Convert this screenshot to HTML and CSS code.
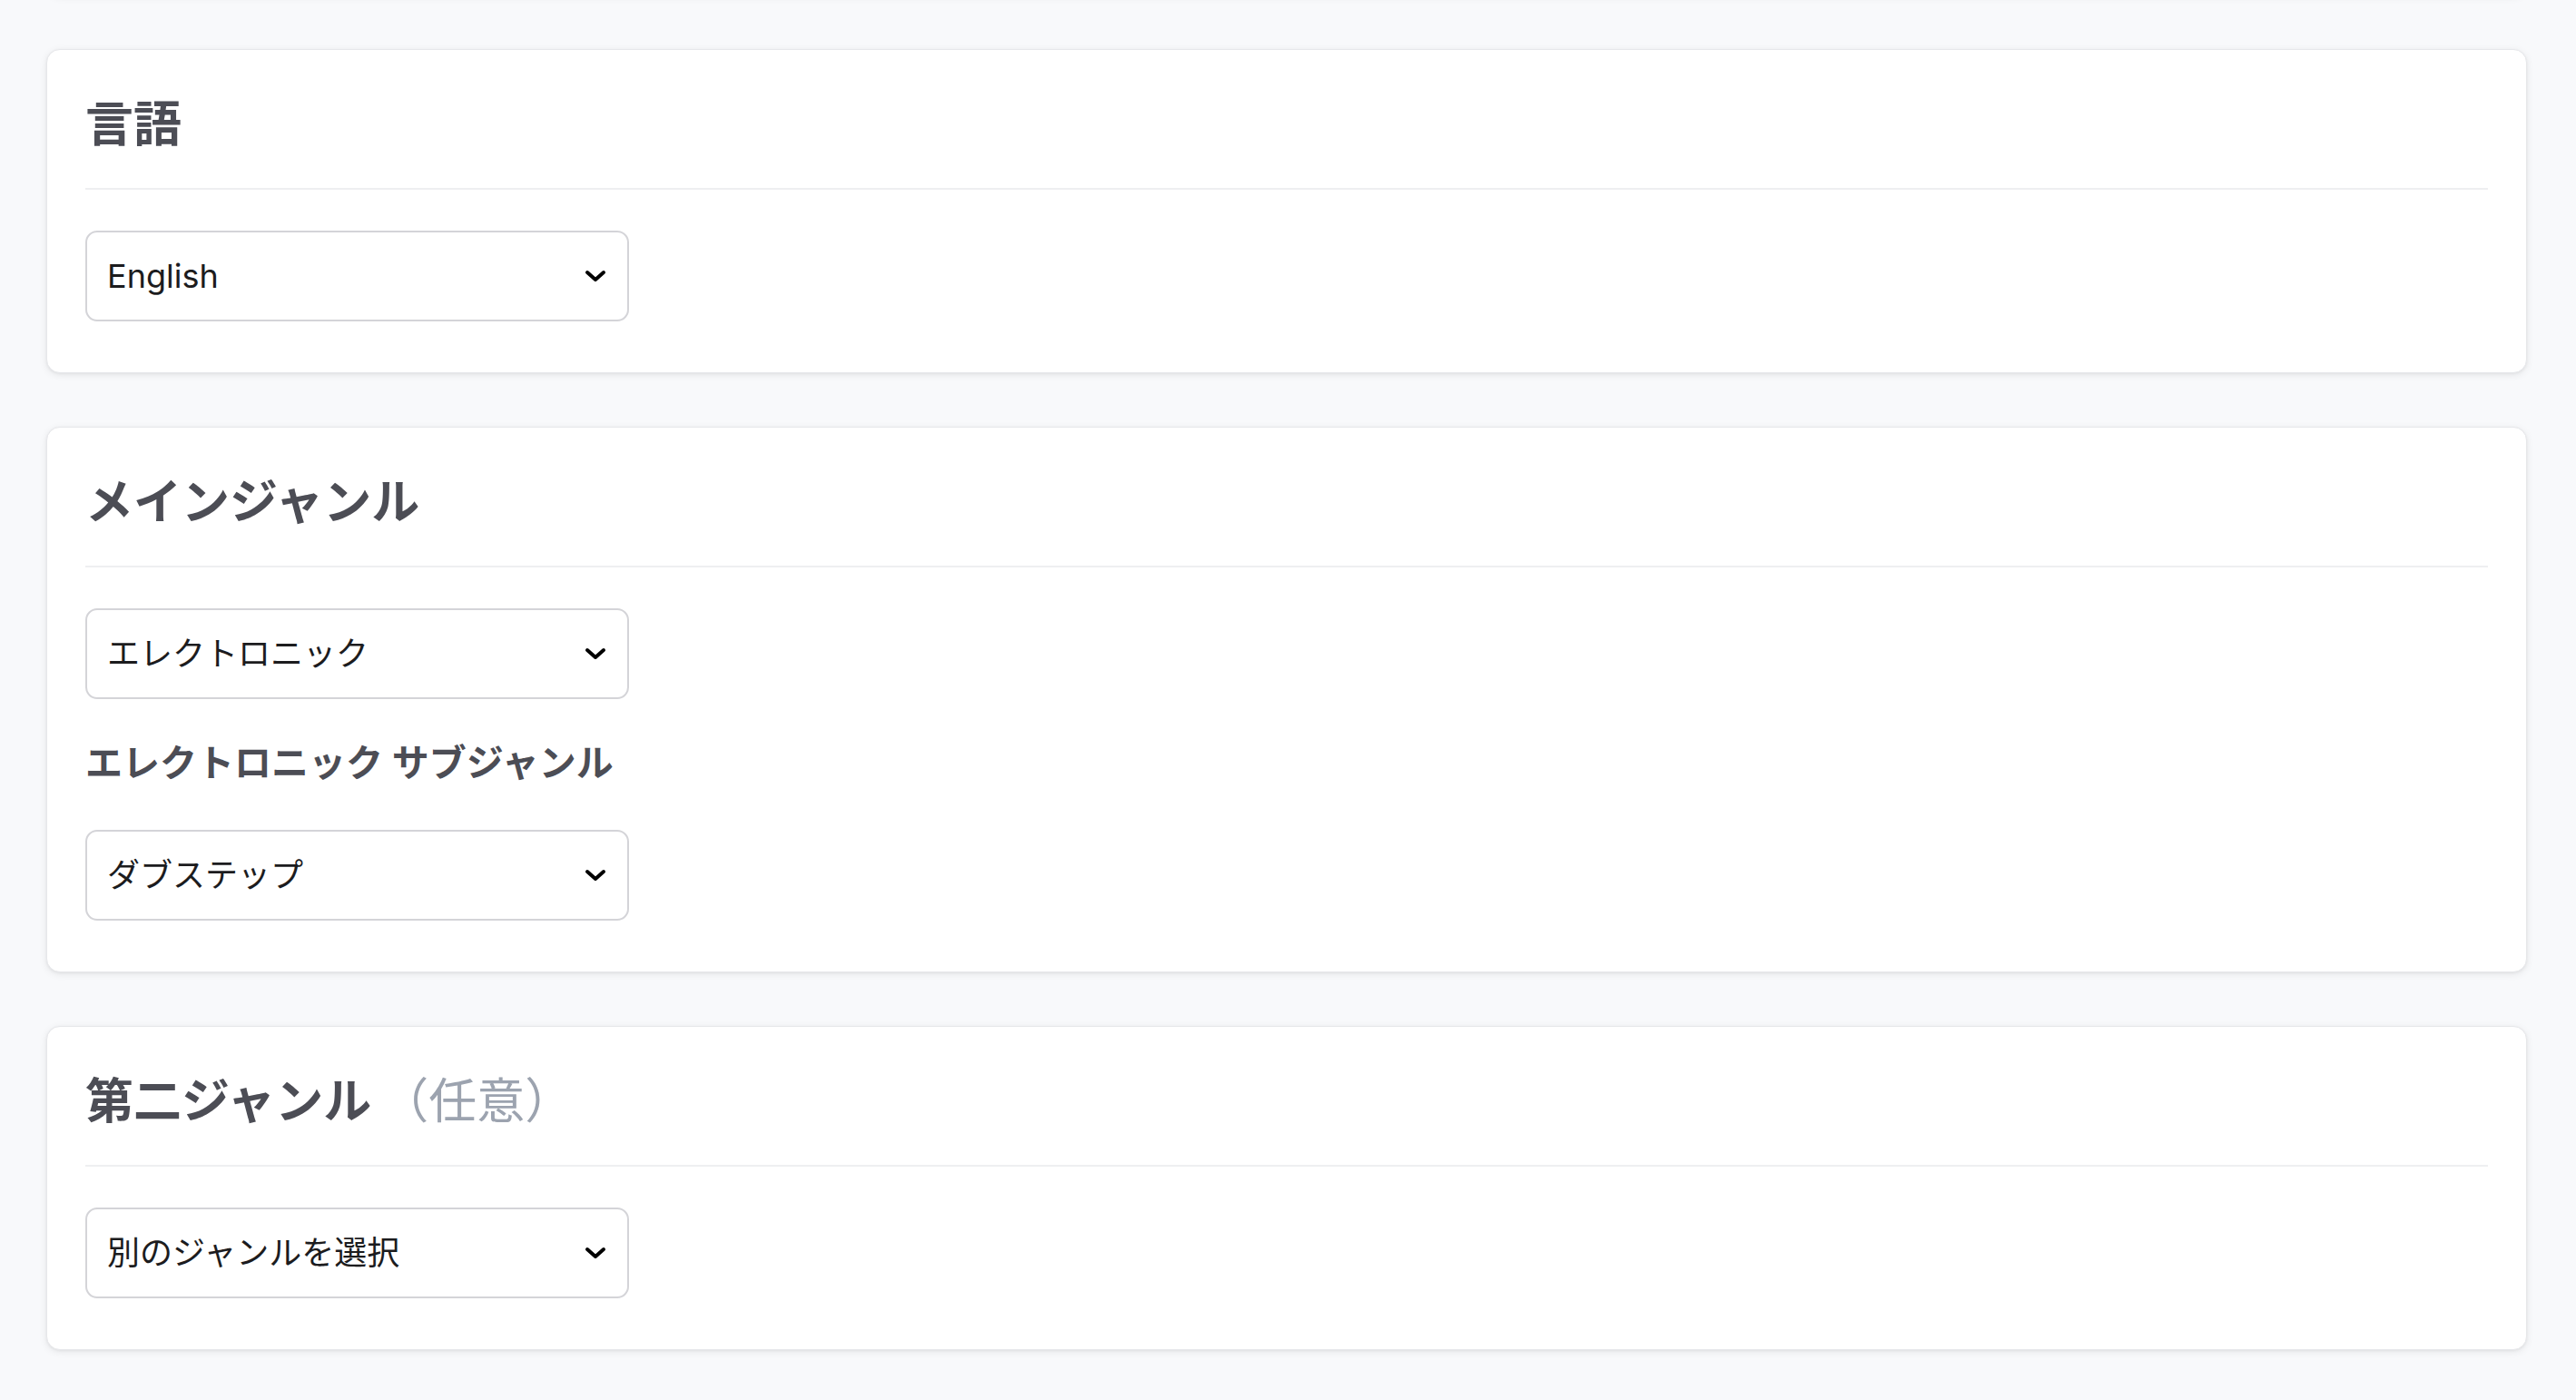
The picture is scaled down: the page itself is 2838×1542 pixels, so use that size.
FILE: index.html
```html
<!doctype html>
<html lang="ja">
<head>
    <meta charset="utf-8">
    <title>ジャンル設定</title>
    <link rel="stylesheet" href="styles.css">
</head>

<body>

    <div class="page">
       <!-- 上にスクロールされたカード -->
       <div class="card card-prev"></div>

       <section class="card">
          <h2 class="card-title">言語</h2>
          <div class="card-body">
             <div class="select-wrap">
                <select class="select">
                   <option>English</option>
                   <option>日本語</option>
                </select>
                <svg class="chevron" viewBox="0 0 24 14" width="24" height="14"><path d="M3 3l9 8 9-8" fill="none" stroke="#000" stroke-width="4" stroke-linecap="round" stroke-linejoin="round"/></svg>
             </div>
          </div>
       </section>

       <section class="card">
          <h2 class="card-title">メインジャンル</h2>
          <div class="card-body">
             <div class="select-wrap">
                <select class="select">
                   <option>エレクトロニック</option>
                   <option>ロック</option>
                   <option>ポップ</option>
                </select>
                <svg class="chevron" viewBox="0 0 24 14" width="24" height="14"><path d="M3 3l9 8 9-8" fill="none" stroke="#000" stroke-width="4" stroke-linecap="round" stroke-linejoin="round"/></svg>
             </div>
             <h3 class="sub-title">エレクトロニック サブジャンル</h3>
             <div class="select-wrap">
                <select class="select">
                   <option>ダブステップ</option>
                   <option>ハウス</option>
                   <option>テクノ</option>
                </select>
                <svg class="chevron" viewBox="0 0 24 14" width="24" height="14"><path d="M3 3l9 8 9-8" fill="none" stroke="#000" stroke-width="4" stroke-linecap="round" stroke-linejoin="round"/></svg>
             </div>
          </div>
       </section>

       <section class="card">
          <h2 class="card-title">第二ジャンル<span class="optional">（任意）</span></h2>
          <div class="card-body">
             <div class="select-wrap">
                <select class="select">
                   <option>別のジャンルを選択</option>
                   <option>ロック</option>
                </select>
                <svg class="chevron" viewBox="0 0 24 14" width="24" height="14"><path d="M3 3l9 8 9-8" fill="none" stroke="#000" stroke-width="4" stroke-linecap="round" stroke-linejoin="round"/></svg>
             </div>
          </div>
       </section>
    </div>

</body>
</html>
```

FILE: styles.css
```css
html, body {
    margin: 0;
    padding: 0;
}
body {
    background-color: #f8f9fb;
    font-family: Inter, "Noto Sans CJK JP", sans-serif;
    color: #1f1f22;
    overflow: hidden;
}
.page {
    display: flex;
    flex-direction: column;
    gap: 59px;
    padding: 0 54px 60px 51px;
    margin-top: -308px;
}
.card {
    background-color: #fff;
    border: 1px solid #e6e7ea;
    border-radius: 15px;
    box-shadow: 0 2px 8px rgba(0, 0, 0, 0.08), 0 1px 3px rgba(0, 0, 0, 0.05);
    padding: 48px 42px 56px;
}
.card-prev {
    height: 197px;
}
.card-title {
    margin: 0;
    padding-bottom: 36px;
    border-bottom: 2px solid #eeeff1;
    font-size: 53px;
    line-height: 68px;
    font-weight: 700;
    color: #4c4d55;
}
.optional {
    margin-left: 10px;
    font-weight: 400;
    color: #9ca3af;
}
.card-body {
    padding-top: 45px;
}
.sub-title {
    margin: 44px 0 48px;
    font-size: 41px;
    line-height: 52px;
    font-weight: 700;
    color: #4c4d55;
}
.select-wrap {
    position: relative;
    width: 599px;
}
.select {
    -webkit-appearance: none;
    appearance: none;
    display: block;
    box-sizing: border-box;
    width: 100%;
    height: 100px;
    padding: 0 70px 0 22px;
    border: 2px solid #d4d4d8;
    border-radius: 13px;
    background-color: #fff;
    font-family: Inter, "Noto Sans CJK JP", sans-serif;
    font-size: 36px;
    color: #1c1c1e;
    outline: none;
}
.chevron {
    position: absolute;
    right: 25px;
    top: 43px;
    pointer-events: none;
}
```
